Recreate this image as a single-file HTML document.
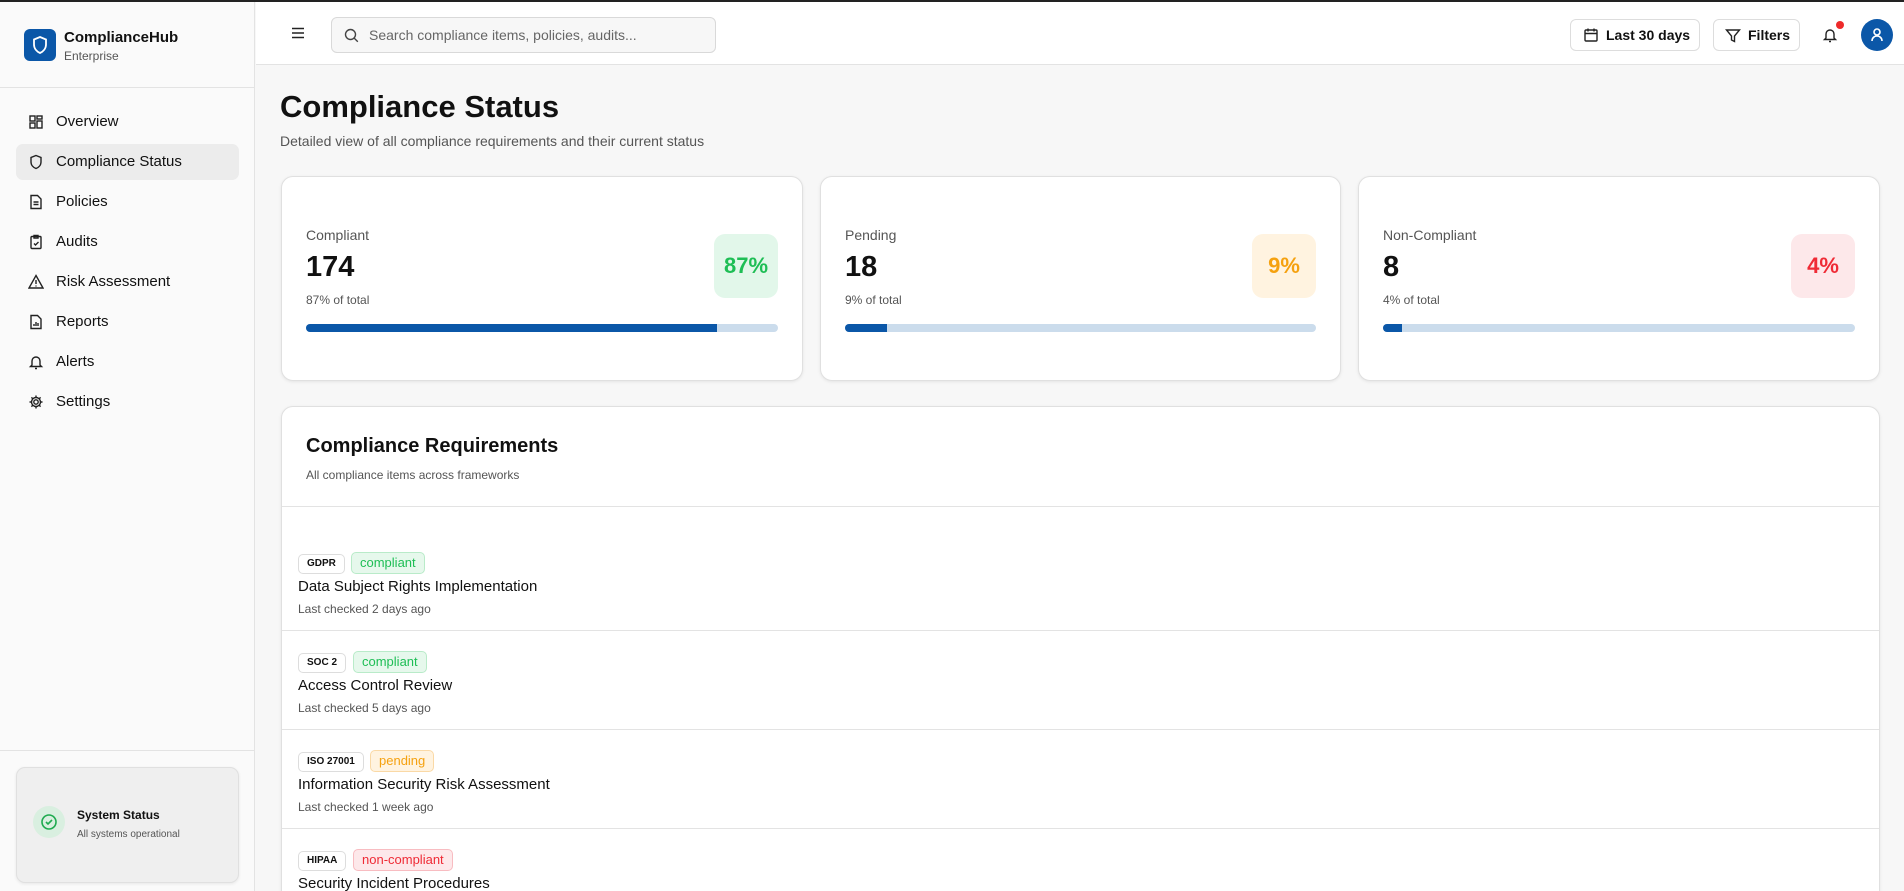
<!DOCTYPE html>
<html style="width:1904px;height:891px;overflow:hidden"><head><meta charset="utf-8"><style>
*{box-sizing:border-box;margin:0;padding:0}
body{width:1904px;height:891px;overflow:hidden;background:#f7f7f7;font-family:"Liberation Sans",sans-serif;color:#111;position:relative;border-top:2px solid #222}
.sb{position:absolute;left:0;top:0;width:255px;height:891px;background:#fafafa;border-right:1px solid #e3e3e3}
.logo{position:absolute;left:24px;top:27px;width:32px;height:32px;background:#0b57a8;border-radius:6px}
.brand{position:absolute;left:64px;top:27px;font-size:15px;font-weight:bold}
.ent{position:absolute;left:64px;top:47px;font-size:12px;color:#555}
.sbline{position:absolute;left:0;width:255px;height:1px;background:#e3e3e3}
.nav{position:absolute;left:16px;width:223px;height:36px;border-radius:7px;font-size:15px;line-height:36px;padding-left:40px}
.nav svg{position:absolute;left:12px;top:10px}
.act{background:#ececec}
.sys{position:absolute;left:16px;top:765px;width:223px;height:116px;background:#efefef;border:1px solid #e0e0e0;border-radius:9px;box-shadow:0 1px 3px rgba(0,0,0,.08)}
.hdr{position:absolute;left:256px;top:0;right:0;height:63px;background:#fff;border-bottom:1px solid #e3e3e3}
.search{position:absolute;left:331px;top:15px;width:385px;height:36px;border:1px solid #d9d9d9;border-radius:6px;background:#f7f7f7;font-size:14px;color:#666;line-height:34px;padding-left:37px}
.btn{position:absolute;top:17px;height:32px;border:1px solid #ddd;border-radius:6px;background:#fff;font-size:14px;line-height:30px;font-weight:600}
.card{position:absolute;background:#fff;border:1px solid #e0e0e0;border-radius:12px;box-shadow:0 1px 3px rgba(0,0,0,.08)}
.lbl{position:absolute;left:24px;top:50px;font-size:14px;color:#555}
.num{position:absolute;left:24px;top:74px;font-size:29px;font-weight:bold}
.sub{position:absolute;left:24px;top:116px;font-size:12px;color:#555}
.bar{position:absolute;left:24px;right:24px;top:147px;height:8px;border-radius:4px;background:#cbdcec;overflow:hidden}
.bar i{display:block;height:100%;background:#0b57a8}
.badge{position:absolute;right:24px;top:57px;width:64px;height:64px;border-radius:11px;font-size:22px;font-weight:bold;text-align:center;line-height:64px}
.item{position:absolute;left:0;right:0;height:99px;border-bottom:1px solid #e3e3e3}
.tag{position:absolute;top:0;height:20px;border:1px solid #ddd;border-radius:5px;font-size:10px;line-height:18px;padding:0 8px;font-weight:600}
.st{position:absolute;top:-2px;height:22px;border-radius:5px;font-size:13px;line-height:20px;padding:0 8px}
.ttl{position:absolute;left:16px;top:24px;font-size:15px}
.lc{position:absolute;left:16px;top:48px;font-size:12px;color:#555}
</style></head><body>
<div class="sb">
<div class="logo"><svg width="32" height="32" viewBox="0 0 32 32"><path d="M16 8l6 2.5v5c0 4-2.7 7-6 8.5-3.3-1.5-6-4.5-6-8.5v-5z" fill="none" stroke="#fff" stroke-width="1.8"/></svg></div>
<div class="brand">ComplianceHub</div><div class="ent">Enterprise</div>
<div class="sbline" style="top:85px"></div>
<div class="nav" style="top:102px"><svg width="16" height="16" viewBox="0 0 16 16" fill="none" stroke="#222" stroke-width="1.4"><rect x="2" y="2" width="5" height="5"/><rect x="9" y="2" width="5" height="3"/><rect x="2" y="9" width="5" height="5"/><rect x="9" y="7" width="5" height="7"/></svg>Overview</div>
<div class="nav act" style="top:142px"><svg width="16" height="16" viewBox="0 0 16 16" fill="none" stroke="#222" stroke-width="1.4"><path d="M8 1.5l5 2v4.5c0 3.2-2.3 5.5-5 6.5-2.7-1-5-3.3-5-6.5V3.5z"/></svg>Compliance Status</div>
<div class="nav" style="top:182px"><svg width="16" height="16" viewBox="0 0 16 16" fill="none" stroke="#222" stroke-width="1.4"><path d="M3 1.5h6.5l3.5 3.5v9.5H3z M5.5 8h5 M5.5 10.5h5"/></svg>Policies</div>
<div class="nav" style="top:222px"><svg width="16" height="16" viewBox="0 0 16 16" fill="none" stroke="#222" stroke-width="1.4"><rect x="3" y="2.5" width="10" height="12" rx="1"/><path d="M6 1.5h4v2.5H6z M6 9.5l1.5 1.5 3-3"/></svg>Audits</div>
<div class="nav" style="top:262px"><svg width="16" height="16" viewBox="0 0 16 16" fill="none" stroke="#222" stroke-width="1.4"><path d="M8 1.5l7 12.5H1z M8 6v4 M8 11.5v1"/></svg>Risk Assessment</div>
<div class="nav" style="top:302px"><svg width="16" height="16" viewBox="0 0 16 16" fill="none" stroke="#222" stroke-width="1.4"><path d="M3 1.5h6.5l3.5 3.5v9.5H3z M6 12v-2 M8 12V8 M10 12v-3"/></svg>Reports</div>
<div class="nav" style="top:342px"><svg width="16" height="16" viewBox="0 0 16 16" fill="none" stroke="#222" stroke-width="1.4"><path d="M4 11V7a4 4 0 018 0v4l1.5 1.5h-11z M7 14.5h2"/></svg>Alerts</div>
<div class="nav" style="top:382px"><svg width="16" height="16" viewBox="0 0 16 16" fill="none" stroke="#222" stroke-width="1.4"><circle cx="8" cy="8" r="2.2"/><path d="M8 1.5v2 M8 12.5v2 M1.5 8h2 M12.5 8h2 M3.4 3.4l1.4 1.4 M11.2 11.2l1.4 1.4 M3.4 12.6l1.4-1.4 M11.2 4.8l1.4-1.4"/><circle cx="8" cy="8" r="4.5"/></svg>Settings</div>
<div class="sbline" style="top:748px"></div>
<div class="sys">
<div style="position:absolute;left:16px;top:38px;width:32px;height:32px;border-radius:50%;background:#d9efe0"><svg width="32" height="32" viewBox="0 0 32 32" fill="none" stroke="#1eaa4f" stroke-width="1.6"><circle cx="16" cy="16" r="7"/><path d="M13 16l2 2 4-4"/></svg></div>
<div style="position:absolute;left:60px;top:40px;font-size:12px;font-weight:600">System Status</div>
<div style="position:absolute;left:60px;top:61px;font-size:10px;color:#555">All systems operational</div>
</div>
</div>
<div class="hdr">
<svg style="position:absolute;left:35px;top:25px" width="14" height="12" viewBox="0 0 14 12" stroke="#222" stroke-width="1.6"><path d="M1 1.5h12 M1 6h12 M1 10.5h12"/></svg>
</div>
<div class="search"><svg style="position:absolute;left:12px;top:10px" width="15" height="15" viewBox="0 0 15 15" fill="none" stroke="#444" stroke-width="1.4"><circle cx="6.5" cy="6.5" r="5"/><path d="M10.3 10.3l3.5 3.5"/></svg>Search compliance items, policies, audits...</div>
<div class="btn" style="left:1570px;width:130px;padding-left:35px"><svg style="position:absolute;left:12px;top:7px" width="16" height="16" viewBox="0 0 16 16" fill="none" stroke="#222" stroke-width="1.4"><rect x="2" y="3" width="12" height="11" rx="1"/><path d="M2 6.5h12 M5 1.5v3 M11 1.5v3"/></svg>Last 30 days</div>
<div class="btn" style="left:1713px;width:87px;padding-left:34px"><svg style="position:absolute;left:11px;top:8px" width="16" height="16" viewBox="0 0 16 16" fill="none" stroke="#222" stroke-width="1.4"><path d="M1.5 2h13l-5 6v5.5l-3-1.5V8z"/></svg>Filters</div>
<svg style="position:absolute;left:1822px;top:25px" width="16" height="16" viewBox="0 0 16 16" fill="none" stroke="#222" stroke-width="1.4"><path d="M4 11V7a4 4 0 018 0v4l1.5 1.5h-11z M7 14.5h2"/></svg>
<div style="position:absolute;left:1836px;top:19px;width:8px;height:8px;border-radius:50%;background:#ee2a2a"></div>
<div style="position:absolute;left:1861px;top:17px;width:32px;height:32px;border-radius:50%;background:#0b57a8"><svg width="32" height="32" viewBox="0 0 32 32" fill="none" stroke="#fff" stroke-width="1.6"><circle cx="16" cy="13" r="3"/><path d="M11 22c0-3 2.2-5 5-5s5 2 5 5"/></svg></div>

<div style="position:absolute;left:280px;top:87px;font-size:31px;font-weight:bold">Compliance Status</div>
<div style="position:absolute;left:280px;top:131px;font-size:14px;color:#555">Detailed view of all compliance requirements and their current status</div>

<div class="card" style="left:281px;top:174px;width:522px;height:205px">
<div class="lbl">Compliant</div><div class="num">174</div><div class="sub">87% of total</div>
<div class="badge" style="background:#e2f7ea;color:#1ebe55">87%</div>
<div class="bar"><i style="width:87%"></i></div></div>
<div class="card" style="left:820px;top:174px;width:521px;height:205px">
<div class="lbl">Pending</div><div class="num">18</div><div class="sub">9% of total</div>
<div class="badge" style="background:#fff3e0;color:#f5a10f">9%</div>
<div class="bar"><i style="width:9%"></i></div></div>
<div class="card" style="left:1358px;top:174px;width:522px;height:205px">
<div class="lbl">Non-Compliant</div><div class="num">8</div><div class="sub">4% of total</div>
<div class="badge" style="background:#fde8ea;color:#ef2b36">4%</div>
<div class="bar"><i style="width:4%"></i></div></div>

<div class="card" style="left:281px;top:404px;width:1599px;height:500px;overflow:hidden">
<div style="position:absolute;left:24px;top:28px;font-size:20px;font-weight:bold">Compliance Requirements</div>
<div style="position:absolute;left:24px;top:61px;font-size:12px;color:#555">All compliance items across frameworks</div>
<div style="position:absolute;left:0;right:0;top:99px;height:1px;background:#e3e3e3"></div>
<div class="item" style="top:125px"><div style="position:absolute;left:0;top:22px;right:0">
<div class="tag" style="left:16px">GDPR</div><div class="st" style="left:69px;background:#e6f8ec;border:1px solid #b9ebc9;color:#1ebe55">compliant</div></div>
<div class="ttl" style="top:46px">Data Subject Rights Implementation</div><div class="lc" style="top:70px">Last checked 2 days ago</div></div>
<div class="item" style="top:224px"><div style="position:absolute;left:0;top:22px;right:0">
<div class="tag" style="left:16px">SOC 2</div><div class="st" style="left:71px;background:#e6f8ec;border:1px solid #b9ebc9;color:#1ebe55">compliant</div></div>
<div class="ttl" style="top:46px">Access Control Review</div><div class="lc" style="top:70px">Last checked 5 days ago</div></div>
<div class="item" style="top:323px"><div style="position:absolute;left:0;top:22px;right:0">
<div class="tag" style="left:16px">ISO 27001</div><div class="st" style="left:88px;background:#fff3e0;border:1px solid #fad9a6;color:#f5a10f">pending</div></div>
<div class="ttl" style="top:46px">Information Security Risk Assessment</div><div class="lc" style="top:70px">Last checked 1 week ago</div></div>
<div class="item" style="top:422px"><div style="position:absolute;left:0;top:22px;right:0">
<div class="tag" style="left:16px">HIPAA</div><div class="st" style="left:71px;background:#fde8ea;border:1px solid #f8bcc1;color:#ef2b36">non-compliant</div></div>
<div class="ttl" style="top:46px">Security Incident Procedures</div></div>
</div>
</body></html>
